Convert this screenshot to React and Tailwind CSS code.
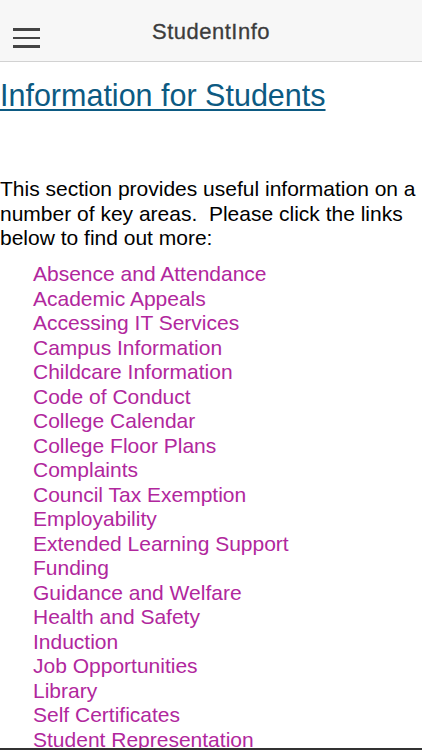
import React from "react";

const links = [
  "Absence and Attendance",
  "Academic Appeals",
  "Accessing IT Services",
  "Campus Information",
  "Childcare Information",
  "Code of Conduct",
  "College Calendar",
  "College Floor Plans",
  "Complaints",
  "Council Tax Exemption",
  "Employability",
  "Extended Learning Support",
  "Funding",
  "Guidance and Welfare",
  "Health and Safety",
  "Induction",
  "Job Opportunities",
  "Library",
  "Self Certificates",
  "Student Representation",
];

export default function App() {
  return (
    <div
      className="w-[422px] h-[750px] flex flex-col overflow-hidden bg-white"
      style={{ fontFamily: '"Liberation Sans", Arial, sans-serif' }}
    >
      <header className="h-[62px] shrink-0 bg-[#f7f7f7] border-b border-[#d2d2d2] relative flex items-center justify-center">
        <button className="absolute left-[13px] top-[28px] flex flex-col gap-[6px]">
          <span className="block w-[27px] h-[2.5px] bg-[#444]"></span>
          <span className="block w-[27px] h-[2.5px] bg-[#444]"></span>
          <span className="block w-[27px] h-[2.5px] bg-[#444]"></span>
        </button>
        <h1 className="text-[22px] tracking-[0.5px] text-[#3c3c3c] leading-none mt-[3px] [-webkit-text-stroke:0.3px_#3c3c3c]">StudentInfo</h1>
      </header>
      <main className="flex-1 overflow-hidden">
        <h2 className="mt-[15px] text-[30.5px] leading-[36px] text-[#0c5a82] underline underline-offset-[3px] decoration-[1.5px]">
          Information for Students
        </h2>
        <p className="mt-[64px] text-[21px] leading-[24.5px] text-black">
          This section provides useful information on a number of key areas.&nbsp; Please click the links below to find out more:
        </p>
        <ul className="mt-[11.5px] pl-[33px] text-[21px] leading-[24.5px] text-[#b1279d]">
          {links.map((l) => (
            <li key={l}>{l}</li>
          ))}
        </ul>
      </main>
      <div className="h-[2px] shrink-0 bg-[#333]"></div>
    </div>
  );
}
